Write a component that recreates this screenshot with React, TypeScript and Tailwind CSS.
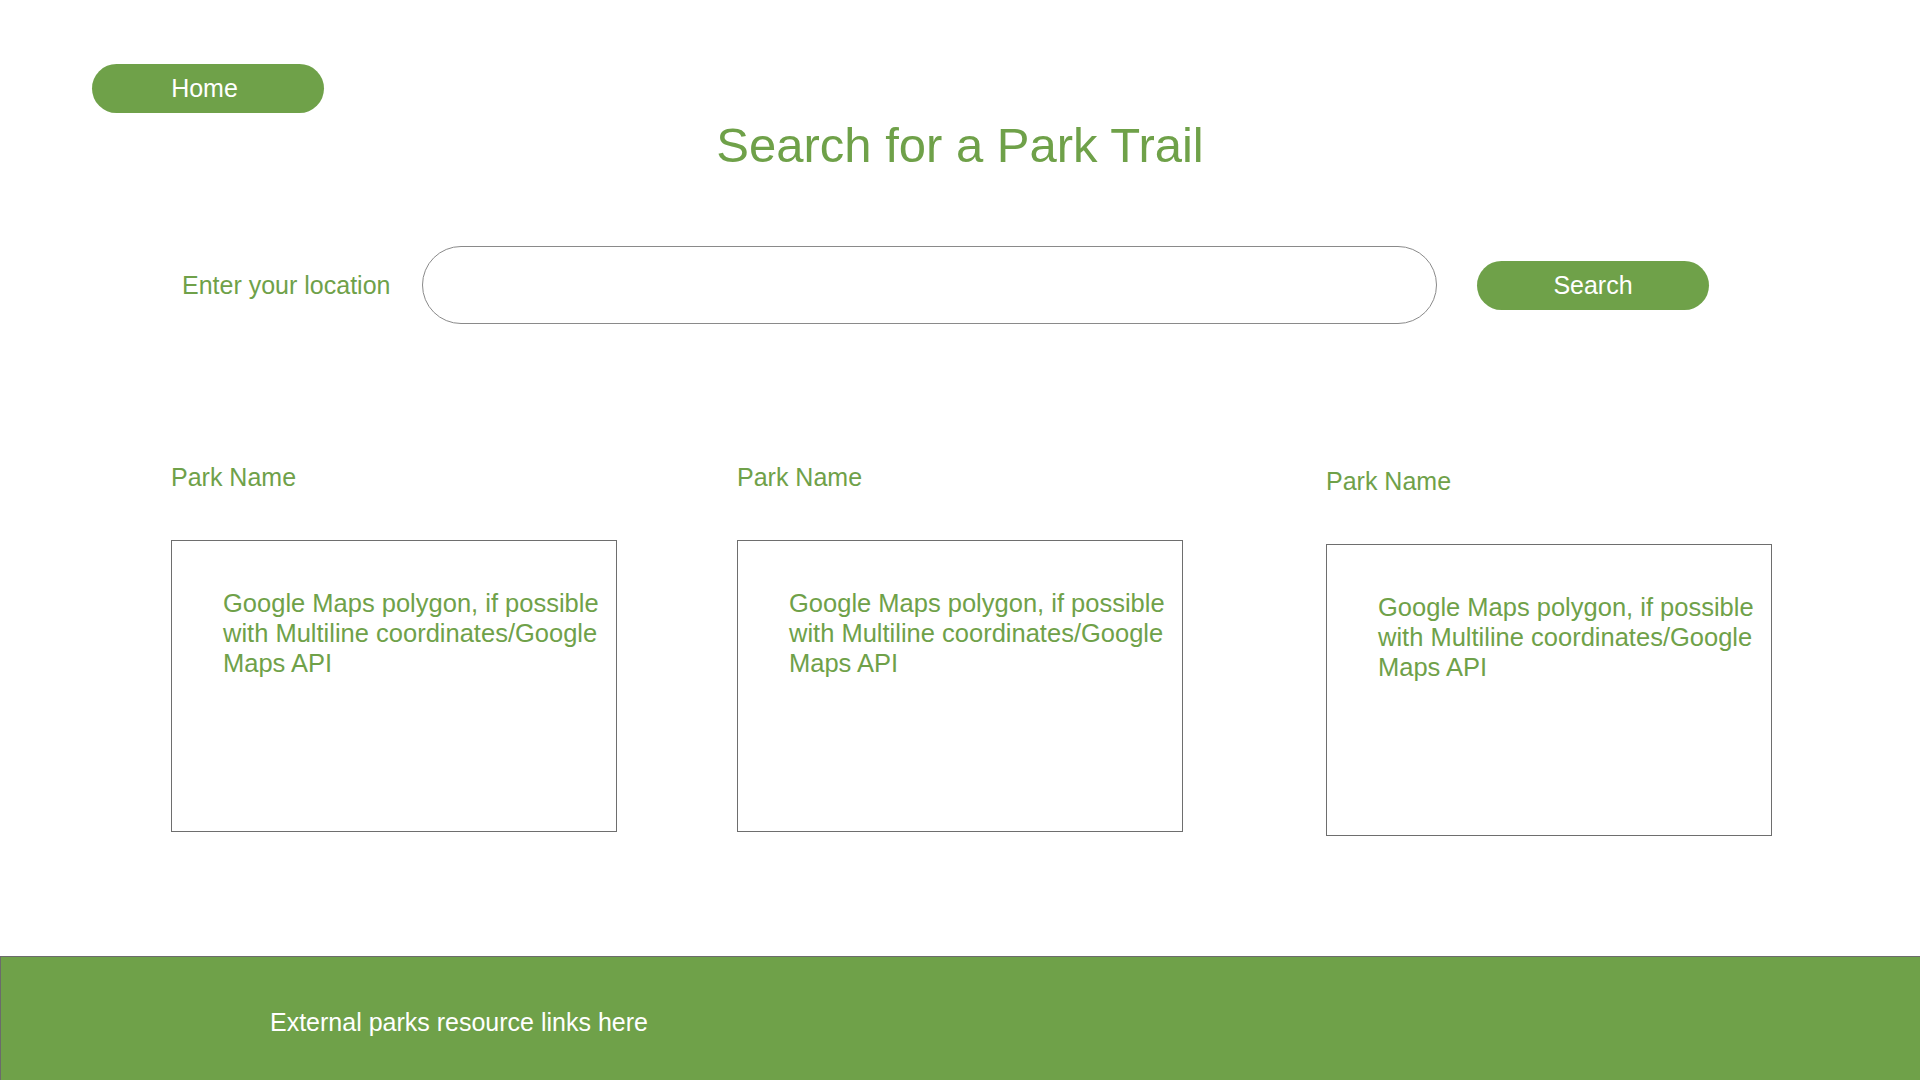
const GREEN = "#6fa149";

type ParkCardProps = {
  name: string;
  className?: string;
};

function PillButton({ label, className = "" }: { label: string; className?: string }) {
  return (
    <button
      className={`flex h-[49px] w-[232px] items-center justify-center rounded-full bg-[#6fa149] text-[25px] leading-none text-white ${className}`}
    >
      {label}
    </button>
  );
}

function ParkCard({ name, className = "" }: ParkCardProps) {
  return (
    <div className={`flex flex-col ${className}`}>
      <h2 className="text-[25px] leading-[30px] text-[#6fa149]">{name}</h2>
      <div className="mt-[48px] h-[292px] w-[446px] border border-[#6e6e6e] pl-[51px] pt-[47px]">
        <p className="text-[25.5px] leading-[30px] text-[#6fa149]">
          Google Maps polygon, if possible
          <br />
          with Multiline coordinates/Google
          <br />
          Maps API
        </p>
      </div>
    </div>
  );
}

export default function App() {
  return (
    <div className="flex h-[1080px] w-[1920px] flex-col bg-white font-['Liberation_Sans',Arial,sans-serif]">
      <div className="pl-[92px] pt-[64px]">
        <PillButton label="Home" className="pr-[7px]" />
      </div>

      <h1
        className="mt-[8px] text-center text-[49px] leading-none"
        style={{ color: GREEN }}
      >
        Search for a Park Trail
      </h1>

      <div className="mt-[76px] flex items-center pl-[182px]">
        <label className="w-[240px] text-[25px] leading-[30px] text-[#6fa149]">
          Enter your location
        </label>
        <input
          type="text"
          className="h-[78px] w-[1015px] rounded-full border border-[#8a8a8a] px-8 text-[25px] outline-none"
        />
        <div className="ml-[40px]">
          <PillButton label="Search" />
        </div>
      </div>

      <div className="mt-[138px] flex items-start">
        <ParkCard name="Park Name" className="ml-[171px]" />
        <ParkCard name="Park Name" className="ml-[120px]" />
        <ParkCard name="Park Name" className="ml-[143px] mt-[4px]" />
      </div>

      <footer className="mt-auto h-[124px] border-l border-t border-[#6b6b6b] bg-[#6fa149] pl-[269px] pt-[50px]">
        <p className="text-[25px] leading-[30px] text-white">
          External parks resource links here
        </p>
      </footer>
    </div>
  );
}
